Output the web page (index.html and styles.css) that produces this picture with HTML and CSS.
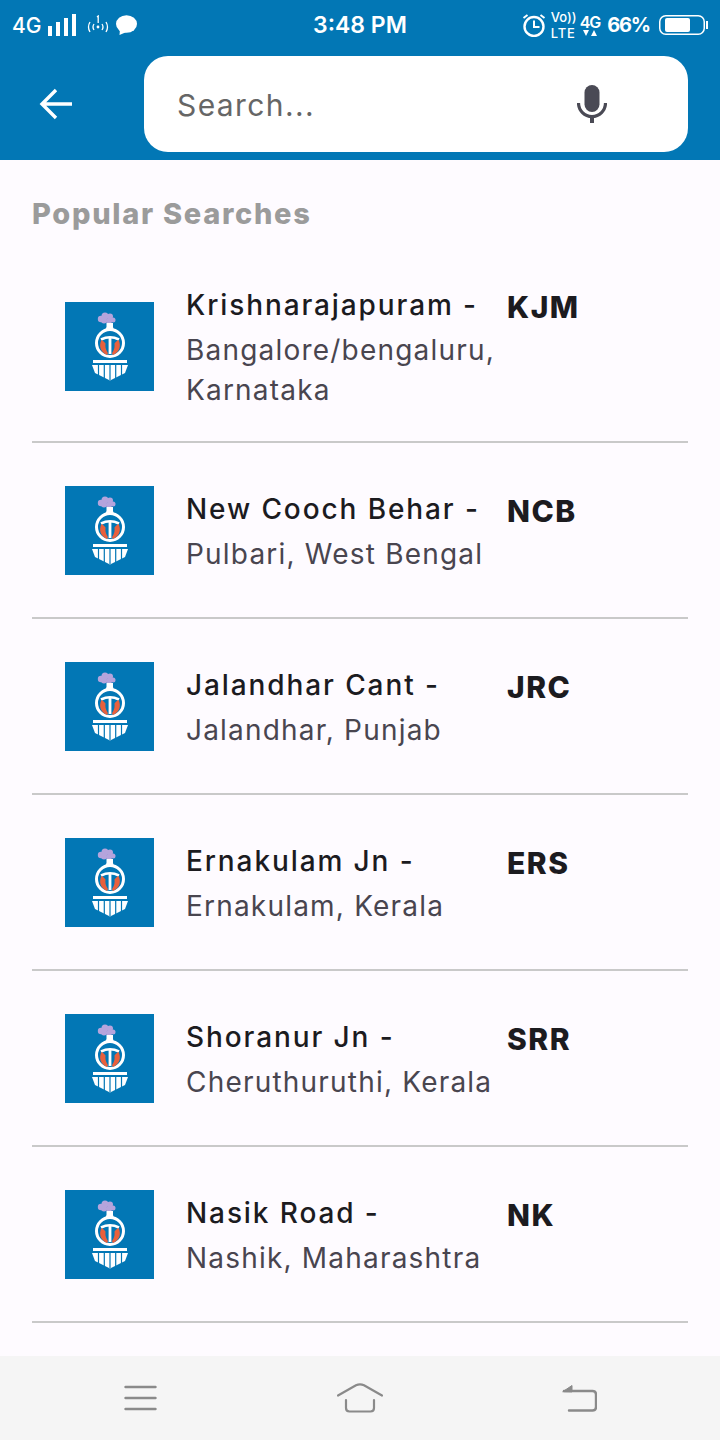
FILE: index.html
```html
<!doctype html>
<html lang="en">
<head>
	<meta charset="UTF-8">
	<title>Search Stations</title>
	<link rel="stylesheet" href="styles.css">
</head>
<body>
	<svg class="defs" width="0" height="0">
		<symbol id="logo" viewBox="0 0 89 89">
			<rect width="89" height="89" fill="#0277b5"/>
			<g fill="#b5a4dc">
				<circle cx="36" cy="17" r="3.200"/><circle cx="40" cy="14" r="3.500"/><circle cx="45" cy="14.500" r="3"/>
				<circle cx="39" cy="18.500" r="3"/><circle cx="44" cy="19" r="3"/><circle cx="48" cy="18" r="2.500"/>
			</g>
			<path d="M41.500 21h6.500v4l1 3h-9l1.500-3z" fill="#fff"/>
			<circle cx="45" cy="41" r="13.500" fill="none" stroke="#fff" stroke-width="3"/>
			<path d="M36 37.500q9-4.500 18 0" fill="none" stroke="#fff" stroke-width="2.600"/>
			<path d="M43.600 35h2.800v17h-2.800z" fill="#fff"/>
			<path d="M36.500 38C33.500 44 35.500 50 42 53c1.200-1 1-2.500 0-3.500-1.500-2.500-1.800-5-1.500-8-1-1.500-2.500-3-4-3.500zM53.500 38c3 6 1 12-5.500 15-1.200-1-1-2.500 0-3.500 1.500-2.500 1.800-5 1.500-8 1-1.500 2.500-3 4-3.500z" fill="#e8603c"/>
			<path d="M28 58h34v3H28z" fill="#fff"/>
			<path d="M27 63h36l-3 8-15 7.500L30 71z" fill="#fff"/>
			<path d="M33.500 63v11M39.300 63v14M45 63v15M50.700 63v14M56.500 63v11" stroke="#0277b5" stroke-width="1.200"/>
		</symbol>
	</svg>

	<header class="top">
		<div class="status">
			<div class="status-left">
				<span class="net">4G</span>
				<svg class="bars" width="29" height="22" viewBox="0 0 29 22" fill="#fff">
					<rect x="0" y="12" width="4" height="10"/><rect x="8" y="8" width="4" height="14"/><rect x="16" y="4" width="4" height="18"/><rect x="24" y="0" width="4" height="22"/>
				</svg>
				<svg class="hotspot" width="22" height="20" viewBox="0 0 22 20" fill="none" stroke="#fff" stroke-width="1.300">
					<path d="M3 7q-3 5 0 10M7 9q-2 3 0 6M19 7q3 5 0 10M15 9q2 3 0 6"/>
					<circle cx="11" cy="12" r="1.400" fill="#fff" stroke="none"/>
					<path d="M10 2l1.200-1v7"/>
				</svg>
				<svg class="chat" width="22" height="20" viewBox="0 0 22 20" fill="#fff">
					<ellipse cx="11.500" cy="9" rx="10.500" ry="8.800"/><path d="M5 14l-.500 6 7-3z"/>
				</svg>
			</div>
			<div class="clock">3:48 PM</div>
			<div class="status-right">
				<svg class="alarm" width="24" height="24" viewBox="0 0 24 24" fill="none" stroke="#fff">
					<circle cx="12" cy="13.500" r="9.500" stroke-width="2.400"/>
					<path d="M12 7.500v6.500h5.500" stroke-width="2"/>
					<path d="M1.500 5l4-3M22.500 5l-4-3" stroke-width="2"/>
				</svg>
				<div class="volte"><span>Vo))</span><span class="volte-lte">LTE</span></div>
				<div class="lte4g">
					<span>4G</span>
					<svg width="14" height="6" viewBox="0 0 14 6" fill="#fff"><path d="M0 0h6L3 6zM8 6h6L11 0z"/></svg>
				</div>
				<span class="pct">66%</span>
				<svg width="49" height="20" viewBox="0 0 49 20">
					<rect x="0.750" y="0.750" width="44.500" height="18.500" rx="6" fill="none" stroke="#fff" stroke-width="1.500"/>
					<rect x="6" y="3" width="25" height="14" rx="2" fill="#fff"/>
					<rect x="47" y="6" width="2" height="8" fill="#fff"/>
				</svg>
			</div>
		</div>
		<div class="searchrow">
			<svg class="back" width="34" height="32" viewBox="0 0 34 32" fill="none" stroke="#fff" stroke-width="3.400">
				<path d="M33 16H3M17 2L3 16l14 14"/>
			</svg>
			<div class="searchbox">
				<span class="placeholder">Search...</span>
				<svg width="30" height="38" viewBox="0 0 30 38" fill="#4a4a55">
					<rect x="7.500" y="0" width="15" height="27" rx="7.500"/>
					<path d="M1.500 18a13.500 13.500 0 0 0 27 0" fill="none" stroke="#4a4a55" stroke-width="3.200"/>
					<rect x="13" y="30" width="4" height="8"/>
				</svg>
			</div>
		</div>
	</header>

	<main class="content">
		<h2 class="heading">Popular Searches</h2>
		<ul class="list">
			<li class="row row-tall">
				<svg class="logo"><use href="#logo"/></svg>
				<div class="body">
					<div class="info"><div class="name">Krishnarajapuram -</div><div class="place">Bangalore/bengaluru, Karnataka</div></div>
					<div class="code">KJM</div>
				</div>
			</li>
			<li class="row">
				<svg class="logo"><use href="#logo"/></svg>
				<div class="body">
					<div class="info"><div class="name">New Cooch Behar -</div><div class="place">Pulbari, West Bengal</div></div>
					<div class="code">NCB</div>
				</div>
			</li>
			<li class="row">
				<svg class="logo"><use href="#logo"/></svg>
				<div class="body">
					<div class="info"><div class="name">Jalandhar Cant -</div><div class="place">Jalandhar, Punjab</div></div>
					<div class="code">JRC</div>
				</div>
			</li>
			<li class="row">
				<svg class="logo"><use href="#logo"/></svg>
				<div class="body">
					<div class="info"><div class="name">Ernakulam Jn -</div><div class="place">Ernakulam, Kerala</div></div>
					<div class="code">ERS</div>
				</div>
			</li>
			<li class="row">
				<svg class="logo"><use href="#logo"/></svg>
				<div class="body">
					<div class="info"><div class="name">Shoranur Jn -</div><div class="place">Cheruthuruthi, Kerala</div></div>
					<div class="code">SRR</div>
				</div>
			</li>
			<li class="row">
				<svg class="logo"><use href="#logo"/></svg>
				<div class="body">
					<div class="info"><div class="name">Nasik Road -</div><div class="place">Nashik, Maharashtra</div></div>
					<div class="code">NK</div>
				</div>
			</li>
		</ul>
	</main>

	<nav class="softkeys">
		<svg width="33" height="26" viewBox="0 0 33 26" fill="none" stroke="#8a8a8a" stroke-width="2.400" stroke-linecap="round">
			<path d="M1.500 2h30M1.500 13h30M1.500 24h30"/>
		</svg>
		<svg width="46" height="30" viewBox="0 0 46 30" fill="none" stroke="#8a8a8a" stroke-width="2.200" stroke-linecap="round" stroke-linejoin="round">
			<path d="M1 12.500L19 2.300q4-2 8 0L45 12.500"/>
			<path d="M9 17v8q0 3.500 3.500 3.500h21q3.500 0 3.500-3.500v-8"/>
		</svg>
		<svg width="35" height="28" viewBox="0 0 35 28" fill="none" stroke="#8a8a8a" stroke-width="2.400" stroke-linecap="round">
			<path d="M2 7h28.500q3.500 0 3.500 3.500V23q0 3.500-3.500 3.500H7"/>
			<path d="M1 7.500L10 1.500V7.500z" fill="#8a8a8a" stroke-width="1"/>
		</svg>
	</nav>
</body>
</html>
```
FILE: styles.css
```css
* {
	box-sizing: border-box;
}

html, body {
	margin: 0;
	padding: 0;
}

body {
	display: flex;
	flex-direction: column;
	width: 720px;
	height: 1440px;
	overflow: hidden;
	background-color: #fefbff;
	font-family: "Inter", "Liberation Sans", sans-serif;
}

ul {
	margin: 0;
	padding: 0;
	list-style: none;
}

.defs {
	position: absolute;
}

.top {
	height: 160px;
	background-color: #0277b5;
	color: #fff;
}

.status {
	display: flex;
	align-items: center;
	justify-content: space-between;
	height: 48px;
	padding: 2px 12px 0 12px;
}

.status-left, .status-right {
	display: flex;
	align-items: center;
	width: 255px;
}

.status-right {
	justify-content: flex-end;
}

.net {
	margin-right: 7px;
	font-size: 21px;
	font-weight: 500;
}

.bars {
	margin-right: 10px;
}

.hotspot {
	margin-right: 6px;
}

.clock {
	font-size: 23px;
	font-weight: 600;
}

.alarm {
	margin-right: 5px;
}

.volte {
	display: flex;
	flex-direction: column;
	margin-right: 3px;
	font-size: 13px;
	font-weight: 500;
	line-height: 16px;
}

.volte-lte {
	letter-spacing: 0.8px;
}

.lte4g {
	display: flex;
	flex-direction: column;
	align-items: center;
	margin-right: 7px;
	font-size: 16px;
	font-weight: 600;
	letter-spacing: -1px;
	line-height: 16px;
}

.pct {
	margin-right: 9px;
	font-size: 20px;
	font-weight: 700;
	letter-spacing: -1.200px;
}

.searchrow {
	display: flex;
	align-items: center;
	padding: 8px 32px 0 39px;
}

.back {
	margin-right: 71px;
}

.searchbox {
	display: flex;
	flex: 1;
	align-items: center;
	justify-content: space-between;
	height: 96px;
	padding: 0 81px 0 33px;
	border-radius: 24px;
	background-color: #fff;
}

.placeholder {
	padding-top: 2px;
	color: #666;
	font-size: 30px;
	letter-spacing: 1.400px;
}

.content {
	flex: 1;
	padding: 0 32px;
}

.heading {
	margin: 36px 0 16px;
	color: #9b9b9b;
	font-size: 29px;
	font-weight: 800;
	letter-spacing: 1.700px;
	line-height: 36px;
}

.row {
	display: flex;
	align-items: center;
	height: 176px;
	padding-left: 33px;
	border-bottom: 2px solid #c9c9c9;
}

.row-tall {
	height: 195px;
	padding-top: 4px;
}

.logo {
	flex: none;
	width: 89px;
	height: 89px;
	margin-right: 32px;
}

.body {
	display: flex;
	align-items: flex-start;
}

.info {
	width: 321px;
	font-size: 28px;
	line-height: 40px;
}

.name {
	margin-bottom: 3px;
	color: #1c1b1f;
	font-weight: 500;
	letter-spacing: 1.900px;
	line-height: 44px;
}

.place {
	color: #49454f;
	letter-spacing: 1.200px;
}

.code {
	margin-top: 2px;
	color: #1c1b1f;
	font-size: 30px;
	font-weight: 800;
	letter-spacing: 1.500px;
	line-height: 44px;
}

.softkeys {
	display: flex;
	align-items: center;
	justify-content: space-between;
	height: 84px;
	padding: 0 123px 0 124px;
	background-color: #f5f5f5;
}
```
